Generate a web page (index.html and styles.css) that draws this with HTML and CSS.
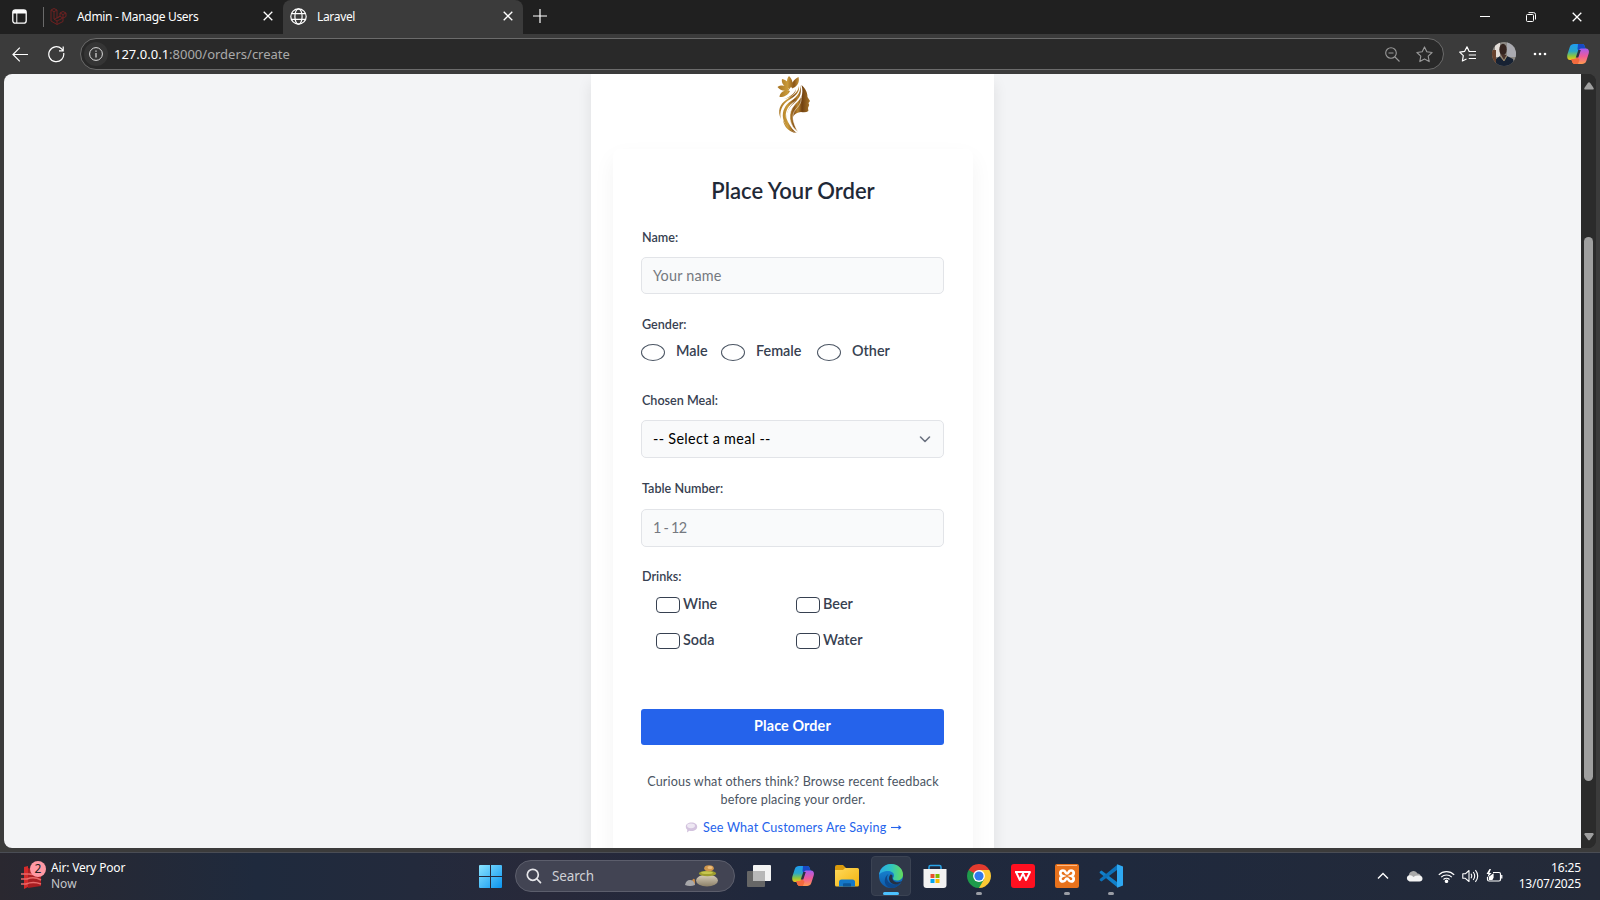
FILE: index.html
```html
<!DOCTYPE html>
<html lang="en">
<head>
<meta charset="utf-8">
<title>Laravel</title>
<link rel="stylesheet" href="styles.css">
</head>
<body>
<svg class="defs" width="0" height="0" aria-hidden="true">
  <defs>
    <linearGradient id="cpA" x1="0" y1="0" x2="0" y2="1"><stop offset="0" stop-color="#1f9bf0"/><stop offset=".45" stop-color="#2aa7c9"/><stop offset=".75" stop-color="#8cc63f"/><stop offset="1" stop-color="#f5c518"/></linearGradient>
    <linearGradient id="cpB" x1="0" y1="0" x2="0" y2="1"><stop offset="0" stop-color="#a55cf0"/><stop offset=".5" stop-color="#ee5a9a"/><stop offset="1" stop-color="#ff9a4d"/></linearGradient>
    <linearGradient id="gold" gradientUnits="userSpaceOnUse" x1="2" y1="0" x2="34" y2="0"><stop offset="0" stop-color="#a87422"/><stop offset=".3" stop-color="#c99a3a"/><stop offset=".5" stop-color="#8a5417"/><stop offset=".62" stop-color="#b98630"/><stop offset=".75" stop-color="#70400f"/><stop offset="1" stop-color="#a8762a"/></linearGradient>
    <linearGradient id="win" x1="0" y1="0" x2="1" y2="1"><stop offset="0" stop-color="#8be4ff"/><stop offset="1" stop-color="#0a94f0"/></linearGradient>
    <linearGradient id="fold" x1="0" y1="0" x2="1" y2="1"><stop offset="0" stop-color="#ffd95a"/><stop offset="1" stop-color="#f2b30f"/></linearGradient>
    <linearGradient id="edgeA" x1="0" y1="0" x2="1" y2="0"><stop offset="0" stop-color="#2aa9e8"/><stop offset=".5" stop-color="#2fc4c0"/><stop offset="1" stop-color="#66dc58"/></linearGradient>
    <linearGradient id="edgeB" x1="0" y1="0" x2="0" y2="1"><stop offset="0" stop-color="#1b8fdc"/><stop offset="1" stop-color="#0c59a8"/></linearGradient>
    <linearGradient id="stone" x1="0" y1="0" x2="0" y2="1"><stop offset="0" stop-color="#d9d0bc"/><stop offset="1" stop-color="#8c8068"/></linearGradient>
    <symbol id="copilot" viewBox="0 0 22 20">
      <path d="M7 0h8c2 0 2.600 1.500 3.300 4L19 6h-4c-2 0-2.500.8-3 2.500L9.800 16H3C.4 16-.2 13.500.4 10.500L2.800 3C3.600.8 5 0 7 0z" fill="url(#cpA)"/>
      <path d="M11 0h4c2 0 2.600 1.500 3.300 4L19 6h-4c-1.800 0-2.500.6-3 2L10.500 5z" fill="#1849c4"/>
      <path d="M15 20H8c-2 0-2.700-1.300-3.300-3.500L4.300 15H7c2 0 2.500-.8 3-2.500L12 6.500C12.500 5 13 4.500 15 4.500h4c2.700 0 3.400 2.500 2.700 5L19.300 17c-.8 2.200-2.300 3-4.300 3z" fill="url(#cpB)"/>
      <path d="M11 20H8c-2 0-2.700-1.300-3.300-3.500L4.300 15H7c1.600 0 2.300-.6 3-2.200l2.500 3z" fill="#f26a3d"/>
      <path d="M8.800 13.500L11.300 6h2.500L11.300 13.500z" fill="#2b3040"/>
    </symbol>
    <symbol id="close" viewBox="0 0 10 10"><path d="M.7.7l8.600 8.600M9.300.7L.7 9.300" stroke="#fff" stroke-width="1.300" fill="none"/></symbol>
  </defs>
</svg>

<div class="screen">
  <div class="tabstrip">
    <svg class="workspaces" width="15" height="15" viewBox="0 0 15 15"><rect x=".8" y=".8" width="13.400" height="13.400" rx="2.500" fill="none" stroke="#fff" stroke-width="1.300"/><path d="M1 2.500Q1 1 3 1h9q2 0 2 1.500V4.500H1z" fill="#fff"/><path d="M4.800 4v10" stroke="#fff"/></svg>
    <span class="strip-line"></span>
    <div class="tab">
      <svg width="17" height="17" viewBox="0 0 17 17" fill="none" stroke="#6e2020" stroke-width="1"><path d="M1 2l3-1.500L7 2v8l3-1.700V5L13 3.500 16 5v3.500l-3 1.600v3.400L7 16.500 1 13zM1 2l3 1.700L7 2M4 3.700V11l3 2 6-3M10 5l3 1.600L16 5M13 6.600v3.500L10 8.300 4 11.500M7 16.500V13"/></svg>
      <span class="tab-title">Admin - Manage Users</span>
      <svg class="tab-close" width="10" height="10"><use href="#close"/></svg>
    </div>
    <div class="tab tab-active">
      <svg width="17" height="17" viewBox="0 0 17 17" fill="none" stroke="#fff" stroke-width="1.200"><circle cx="8.500" cy="8.500" r="7.700"/><ellipse cx="8.500" cy="8.500" rx="3.600" ry="7.700"/><path d="M1.500 5.700h14M1.500 11.300h14"/></svg>
      <span class="tab-title">Laravel</span>
      <svg class="tab-close" width="10" height="10"><use href="#close"/></svg>
    </div>
    <svg class="newtab" width="14" height="14"><path d="M7 0v14M0 7h14" stroke="#fff" stroke-width="1.200"/></svg>
    <div class="winctl">
      <svg width="10" height="10"><path d="M0 4.500h10" stroke="#fff"/></svg>
      <svg width="10" height="10" viewBox="0 0 10 10" fill="none" stroke="#fff"><rect x=".5" y="2.500" width="7" height="7" rx="1"/><path d="M2.500.6H7.500Q9.500.6 9.500 2.500V7.500"/></svg>
      <svg width="10" height="10"><use href="#close"/></svg>
    </div>
  </div>

  <div class="toolbar">
    <svg class="back" width="16" height="15" viewBox="0 0 16 15" fill="none" stroke="#fff" stroke-width="1.200"><path d="M16 7.500H1M7.800.7L1 7.500l6.800 6.800"/></svg>
    <svg class="reload" width="17" height="17" viewBox="0 0 17 17" fill="none" stroke="#fff" stroke-width="1.200"><path d="M15.700 7A7.500 7.500 0 1 1 13.500 2.800L15 4.400M15.200.6v4.200H11"/></svg>
    <div class="address">
      <span class="info"><svg width="14" height="14" viewBox="0 0 14 14" fill="none" stroke="#ddd"><circle cx="7" cy="7" r="6.400"/><path d="M7 6v4.500M7 3.500v1.300" stroke-width="1.200"/></svg></span>
      <span class="url"><b>127.0.0.1</b>:8000/orders/create</span>
      <svg class="zoomicon" width="15" height="15" viewBox="0 0 15 15" fill="none" stroke="#999" stroke-width="1.100"><circle cx="6" cy="6" r="5.300"/><path d="M3.500 6h5M10 10l4.500 4.500"/></svg>
      <svg width="17" height="17" viewBox="0 0 17 17" fill="none" stroke="#999" stroke-width="1.100" stroke-linejoin="round"><path d="M8.500.9l2.300 4.900 5.300.7-3.900 3.700 1 5.400-4.700-2.700-4.700 2.700 1-5.400L.9 6.500l5.300-.7z"/></svg>
    </div>
    <svg class="favs" width="17" height="16" viewBox="0 0 17 16" fill="none" stroke="#fff" stroke-width="1.200" stroke-linejoin="round"><path d="M11 5.500h-.8L8 .8 5.700 5.300l-5 .8L4.300 9.600l-.9 5.400L7.500 13M11 5.500h6M9.800 9h7.200M9.800 12.500h7.200"/></svg>
    <svg class="avatar" width="24" height="24" viewBox="0 0 24 24"><clipPath id="av"><circle cx="12" cy="12" r="12"/></clipPath><g clip-path="url(#av)"><path fill="#8d8984" d="M0 0h24v24H0z"/><path fill="#e3ddd8" d="M3 0h5v15H3z"/><path fill="#69432f" d="M0 8h4v16H0z"/><path fill="#aaaab0" d="M15 0h9v15h-9z"/><ellipse cx="11" cy="7.500" rx="3.700" ry="5.800" fill="#35241f"/><path d="M4 24V17l4-3 4 5 3-5 6 3 2 8z" fill="#172233"/><path d="M8.500 12l3.500 6 2.500-5z" fill="#4a3229"/><path d="M8 14l4 5 3-5" fill="none" stroke="#b59a6a" stroke-width=".7"/></g></svg>
    <svg class="dots" width="14" height="4" fill="#fff"><circle cx="2" cy="2" r="1.300"/><circle cx="7" cy="2" r="1.300"/><circle cx="12" cy="2" r="1.300"/></svg>
    <svg class="cp-top" width="22" height="20"><use href="#copilot"/></svg>
  </div>

  <div class="viewport">
    <main class="page">
      <div class="column">
        <svg class="logo" width="36" height="60" viewBox="0 0 36 60" fill="url(#gold)">
          <path d="M15 13C11 10 9.500 5 13 1C17 5 17.500 9 15 13zM14 14C8 12 5 8 6 4C11 5 14.500 9 14 14zM13.500 15C8 16.500 4 15.500 1.500 12C6 9 10.500 11 13.500 15zM14 16C12 20.500 7 22.500 3.500 22C4 17.500 8 14.500 14 16zM16 13.500C14.500 9 17.500 4.500 22.500 2C24 8 20.500 12 16 13.500z"/>
          <path d="M25.500 10C30 14 31.500 18 31.500 22L34 26 32.500 28 33.200 30 32 33 32.400 36Q30 38 25 37C18 38 16 42 16 47C13.500 41 15 37 19 32C25 26 28 19 25.500 10z"/>
          <path d="M24 10C27 20 22 25 16 30C11 35 9 41 12 47C14.500 52 18 56 21 58C13 56 8 49 7 43C6 36 9 30 15 26C22 21 25 17 24 10z"/>
          <path d="M23 11C24 18 18 22 13 25C6 29 3 37 5 44C1 36 4 29 10 25C16 21 22 18 23 11zM20 14C19 18 14 22 8 24C14 23 20 19 20 14zM7 45C10 51 15 56 20 58C13 57 8 52 7 45z"/>
          <path d="M20 25.500C12 30 8 37 10.500 45C10.500 37 13 31 20 25.500z" fill="#fff"/>
          <path d="M25 22C21 29 13 32 14 44C15 50 18 54 22 57C17 48 14.500 40 20 34C24.500 29.500 25.500 26 25 22z" stroke="#fff" stroke-width=".5"/>
        </svg>
        <form class="card">
          <h1><span class="t-title">Place Your Order</span></h1>
          <label class="lbl lbl-name">Name:</label>
          <div class="field f-name"><span class="placeholder t-yn">Your name</span></div>
          <label class="lbl lbl-gender">Gender:</label>
          <div class="radios">
            <span class="radio"></span><span class="opt o-male">Male</span>
            <span class="radio"></span><span class="opt o-female">Female</span>
            <span class="radio"></span><span class="opt o-other">Other</span>
          </div>
          <label class="lbl lbl-meal">Chosen Meal:</label>
          <div class="field f-select"><span class="t-select">-- Select a meal --</span><svg width="12" height="8" viewBox="0 0 12 8" fill="none" stroke="#6b7280" stroke-width="1.600" stroke-linecap="round" stroke-linejoin="round"><path d="M1.500 2l4.500 4.500L10.500 2"/></svg></div>
          <label class="lbl lbl-table">Table Number:</label>
          <div class="field f-table"><span class="placeholder t-range">1 - 12</span></div>
          <label class="lbl lbl-drinks">Drinks:</label>
          <div class="drinks">
            <div><span class="check"></span><span class="opt">Wine</span></div>
            <div><span class="check"></span><span class="opt">Beer</span></div>
            <div><span class="check"></span><span class="opt">Soda</span></div>
            <div><span class="check"></span><span class="opt">Water</span></div>
          </div>
          <div class="submit"><span class="t-submit">Place Order</span></div>
          <p class="hint"><span>Curious what others think? Browse recent feedback</span><br><span>before placing your order.</span></p>
          <div class="more"><svg width="13" height="11" viewBox="0 0 13 11"><path d="M6.500.6c3.400 0 5.700 1.700 5.700 4.200S9.900 9 6.500 9c-.8 0-1.500-.1-2.200-.3L2 10.500l.3-2.700C1.300 7 .8 6 .8 4.800.8 2.300 3.100.6 6.500.6z" fill="#d3c3de"/><ellipse cx="6" cy="3.800" rx="4" ry="2.400" fill="#eee8f3"/></svg><span class="t-more">See What Customers Are Saying</span><svg class="arrow" width="11" height="7" viewBox="0 0 11 7"><path d="M0 3.500h9" stroke="#2563eb" stroke-width="1.100"/><path d="M7.500 1l3 2.500-3 2.500z" fill="#2563eb"/></svg></div>
        </form>
      </div>
    </main>
    <div class="scrollbar">
      <svg width="10" height="8"><path d="M4 .8Q5-.3 6 .8L9.600 6Q10 7.600 8.600 7.600H1.400Q0 7.600.4 6z" fill="#9f9f9f"/></svg>
      <span class="thumb"></span>
      <svg width="10" height="8"><path d="M4 6.800Q5 7.900 6 6.800L9.600 1.600Q10 0 8.600 0H1.400Q0 0 .4 1.600z" fill="#9f9f9f"/></svg>
    </div>
  </div>

  <div class="taskbar">
    <div class="weather">
      <svg width="28" height="32" viewBox="0 0 28 32"><path d="M5 7l4-1v21l-4 2z" fill="#d52a2a"/><path d="M9 8l13 4v14L9 28z" fill="#a81e22"/><path d="M2 14h8q6 1 12 0M2 19h6q7-3 14 1M2 24h5q7-3 15 0" stroke="#e86a6a" stroke-width="1.500" fill="none"/><circle cx="19" cy="9" r="8" fill="#ff99a4"/></svg>
      <span class="badge">2</span>
      <div class="wx"><span class="t-air">Air: Very Poor</span><span class="now">Now</span></div>
    </div>
    <svg class="start" width="23" height="23" viewBox="0 0 23 23" fill="url(#win)"><path d="M0 1Q0 0 1 0h10v11H0zM12 0h10q1 0 1 1v10H12zM0 12h11v11H1q-1 0-1-1zM12 12h11v10q0 1-1 1H12z"/></svg>
    <div class="search">
      <svg width="16" height="16" viewBox="0 0 16 16" fill="none" stroke="#e6e6ea" stroke-width="1.700" stroke-linecap="round"><circle cx="6.800" cy="6.800" r="5.500"/><path d="M11 11l3.500 3.700"/></svg>
      <span class="t-search">Search</span>
      <svg class="stones" width="34" height="22" viewBox="0 0 34 22"><ellipse cx="22" cy="15.500" rx="11" ry="6" fill="url(#stone)"/><ellipse cx="22.500" cy="8.500" rx="8.700" ry="2.800" fill="#9d9d2e"/><ellipse cx="22" cy="7.700" rx="6" ry="1.400" fill="#c6c64e"/><ellipse cx="24" cy="3.300" rx="4.800" ry="3" fill="#cf964c"/><ellipse cx="25" cy="2.500" rx="2.500" ry="1.500" fill="#edbd7c"/><path d="M5 19l3-5q2-1 2 2v4z" fill="#c88b45"/><path d="M0 20q1-5 5-5t5 5q-5 2-10 0z" fill="#a8a8aa"/></svg>
    </div>
    <div class="apps">
      <div class="app"><svg width="24" height="24" viewBox="0 0 24 24"><rect x="6" y="1" width="18" height="16" rx="1" fill="#f3f3f3"/><rect x="0" y="7" width="18" height="16" rx="1" fill="#666"/><path d="M6 7h12v10H6z" fill="#b8b8b8"/></svg></div>
      <div class="app"><svg width="22" height="20"><use href="#copilot"/></svg></div>
      <div class="app"><svg width="24" height="22" viewBox="0 0 24 22"><path d="M0 2Q0 0 2 0h6l2.500 2.500V7H0z" fill="#d99a0c"/><path d="M0 5h8l2-2h12.500Q24 3 24 4.500V20q0 1.500-1.500 1.500h-21Q0 21.500 0 20z" fill="url(#fold)"/><path d="M4 21.500V17q0-2.500 2.500-2.500h11Q20 14.500 20 17v4.500z" fill="#1478c8"/><path d="M8 21.500v-2.200q0-1 1-1h6q1 0 1 1v2.200z" fill="#0c5798"/></svg></div>
      <div class="app app-on"><svg width="24" height="24" viewBox="0 0 24 24"><circle cx="12" cy="12" r="12" fill="url(#edgeB)"/><path d="M0 11C1 4 6 0 12 0c7 0 12 5 12 10.500 0 4-3 6-6 6-2.500 0-4-1-4-2s1-1.500 1-3C15 8.500 12 7 9 7 5 7 1 9 0 11z" fill="url(#edgeA)"/><path d="M9.500 10C6 14 9 20 15 20.500c3 .2 5.500-.8 7-2 -2 3.500-6 5.500-10 5.500C7 23 5 19 6 15c.5-2.500 2-4 3.500-5z" fill="#0d488c"/><path d="M13.500 12c-1 4 2 6.500 5.500 6.300 2.500-.2 4-1.300 4.500-1.800-1 2-4 4-7.500 4-5-.5-8-6-4.500-10 1 0 2 .5 2 1.500z" fill="#263044"/></svg><span class="run run-wide"></span></div>
      <div class="app"><svg width="24" height="24" viewBox="0 0 24 24"><path d="M6 6V3q0-1.500 1.500-1.500h9Q18 1.500 18 3v3" fill="none" stroke="#29a3e8" stroke-width="1.500"/><path d="M.5 5h23v16q0 3-3 3h-17q-3 0-3-3z" fill="#f2f2f2"/><path fill="#e9502c" d="M7.500 10h4v4h-4z"/><path fill="#7fba00" d="M12.500 10h4v4h-4z"/><path fill="#00a4ef" d="M7.500 15h4v4h-4z"/><path fill="#fbb900" d="M12.500 15h4v4h-4z"/></svg></div>
      <div class="app"><svg width="24" height="24" viewBox="0 0 24 24"><path d="M12 12V24A12 12 0 0 0 22.390 6H12z" fill="#fcc934"/><path d="M12 6h10.400A12 12 0 0 0 1.610 6l5.200 9z" fill="#e33b2e"/><path d="M1.610 6A12 12 0 0 0 12 24l5.200-9z" fill="#1e9b4b"/><circle cx="12" cy="12" r="5.900" fill="#fff"/><circle cx="12" cy="12" r="4.600" fill="#3079ec"/></svg><span class="run"></span></div>
      <div class="app"><svg width="24" height="24" viewBox="0 0 24 24"><rect width="24" height="24" rx="3" fill="#ff1020"/><path d="M4 8h12M5 8l3.800 8L12 9.500l3 6.500L19 8h-3.500" fill="none" stroke="#fff" stroke-width="1.900" stroke-linejoin="round"/></svg></div>
      <div class="app"><svg width="24" height="24" viewBox="0 0 24 24"><rect width="24" height="24" rx="2" fill="#e8721c"/><path d="M2 1.500h20" stroke="#ffb780"/><path d="M8 6.500c-3.500 0-3.500 4.500-.5 5.500-3 1-3 5.500.5 5.500 3 0 2-3 4-3s1 3 4 3c3.500 0 3.500-4.500.5-5.500 3-1 3-5.500-.5-5.500-3 0-2 3-4 3s-1-3-4-3z" fill="none" stroke="#fff" stroke-width="2.700"/></svg><span class="run"></span></div>
      <div class="app"><svg width="24" height="24" viewBox="0 0 24 24"><path d="M1 7.500l1.500-1L18 18v5L.8 9q-.6-.8.2-1.500z" fill="#1180ca"/><path d="M1 16.500l1.500 1L18 6V1L.8 15q-.6.800.2 1.500z" fill="#0d72ba"/><path d="M17.500 0L24 2.500v19L17.500 24q1 0 .5-1.500V1.500Q18.500 0 17.500 0z" fill="#2ea8f2"/></svg><span class="run"></span></div>
    </div>
    <div class="tray">
      <svg class="up" width="12" height="8" fill="none" stroke="#fff" stroke-width="1.400"><path d="M1 6.500l5-5 5 5"/></svg>
      <svg class="cloud" width="17" height="12" viewBox="0 0 17 12"><path d="M3 6a4.500 4.500 0 0 1 8.500-2.500A4 4 0 0 1 15 7z" fill="#aaa"/><path d="M3.500 11.500a3.200 3.200 0 0 1 0-6.300c2-.2 3 .7 4 1.300 2-1 4-1.300 6-1 2 .3 3 1.600 3 3.200s-1.200 2.800-3 2.800z" fill="#f4f4f4"/></svg>
      <svg class="wifi" width="17" height="13" viewBox="0 0 17 13" fill="none" stroke="#fff" stroke-width="1.200"><path d="M.8 4.800a10.900 10.900 0 0 1 15.400 0M3.200 7.200a7.500 7.500 0 0 1 10.600 0M5.500 9.500a4.200 4.200 0 0 1 6 0"/><circle cx="8.500" cy="11.300" r="1.200" fill="#fff"/></svg>
      <svg class="spk" width="17" height="14" viewBox="0 0 17 14" fill="none" stroke="#fff" stroke-width="1.100" stroke-linejoin="round"><path d="M.8 4.800h2.500L7 1.500v11L3.300 9.300H.8zM9 4.800q1.500 2.200 0 4.400M11.200 3q3 4 0 8M13.400 1.200q4.600 5.800 0 11.600"/></svg>
      <svg class="bat" width="17" height="14" viewBox="0 0 17 14" fill="none" stroke="#fff" stroke-width="1.200"><path d="M7 3.500h6q1.500 0 1.500 1.500v5.500Q14.500 12 13 12H3q-1.500 0-1.500-1.500V8M15.800 6v3.500"/><path d="M3.500 10.500V8L7 5.500v3l-1 2z" fill="#fff"/><path d="M3.500 0L.5 5h2L1.500 8.500 5.500 4H3.300L5 0z" fill="#fff" stroke="none"/></svg>
      <div class="clock"><span>16:25</span><span>13/07/2025</span></div>
    </div>
  </div>
</div>
</body>
</html>
```
FILE: styles.css
```css
* { box-sizing: border-box; }
html, body { margin: 0; overflow: hidden; }
body { font-family: "Noto Sans", sans-serif; background: #3b3b3b; }
.defs { position: absolute; }
svg { display: block; flex: none; }
span, label { white-space: nowrap; }
.screen { width: 1600px; height: 900px; display: flex; flex-direction: column; overflow: hidden; background: #3b3b3b; }

/* browser tabs */
.tabstrip { height: 34px; flex: none; display: flex; align-items: center; background: #202020; color: #fff; font-size: 12px; padding-bottom: 1px; }
.workspaces { margin-left: 12px; }
.strip-line { width: 1px; height: 20px; margin-left: 16px; background: #6a6a6a; }
.tab { width: 239px; height: 34px; padding: 0 10px 1px 6px; display: flex; align-items: center; }
.tab-title { margin-left: 10px; letter-spacing: -.33px; }
.tab-close { margin-left: auto; }
.tab-active { width: 240px; background: #3b3b3b; border-radius: 8px 8px 0 0; padding-left: 7px; }
.newtab { margin: 0 0 2px 10px; }
.winctl { margin: 0 18px 0 auto; display: flex; gap: 36px; }

/* toolbar */
.toolbar { height: 40px; flex: none; display: flex; align-items: center; background: #3b3b3b; }
.back { margin-left: 12px; }
.reload { margin-left: 20px; }
.address { margin-left: 15px; width: 1364px; height: 32px; border: 1px solid #6b6b6b; border-radius: 16px; background: #292929; display: flex; align-items: center; padding: 0 10px 0 3px; }
.info { width: 24px; height: 24px; border-radius: 12px; background: #353535; display: grid; place-items: center; }
.url { margin-left: 6px; font-size: 13px; color: #a9a9a9; }
.url b { color: #fff; font-weight: 400; }
.zoomicon { margin: 0 16px 0 auto; }
.favs { margin-left: 15px; }
.avatar { margin-left: 16px; }
.dots { margin-left: 17px; }
.cp-top { margin-left: 20px; }

/* page viewport */
.viewport { height: 774px; flex: none; margin: 0 4px; display: flex; border-radius: 8px; overflow: hidden; background: #2b2b2b; }
.page { width: 1577px; background: #f3f4f6; display: flex; justify-content: center; overflow: hidden; }
.column { width: 403px; height: 900px; background: #fff; box-shadow: 0 9px 14px rgba(0,0,0,.09); display: flex; flex-direction: column; align-items: center; }
.logo { margin: 1px 0 14px 3px; flex: none; }
.card { width: 360px; height: 760px; flex: none; margin-left: 1px; padding: 28px 28px 0; border-radius: 7px; background: #fff; box-shadow: 0 9px 22px rgba(0,0,0,.05); display: flex; flex-direction: column; font-family: Lato, sans-serif; color: #1f2937; }
.card h1 { margin: 0; height: 28px; line-height: 28px; font-size: 22px; font-weight: 600; text-align: center; }
.lbl { height: 18px; line-height: 18px; flex: none; font-size: 12.600px; font-weight: 600; color: #374151; padding-left: 1px; }
.lbl-name { margin-top: 24px; }
.field { height: 38px; flex: none; border: 1px solid #e2e4e8; border-radius: 5px; background: #f9fafb; padding: 0 12px 1px 11px; display: flex; align-items: center; justify-content: space-between; font-size: 14.400px; color: #000; width: 303px; }
.placeholder { color: #757980; }
.t-yn { letter-spacing: .2px; }
.t-select { letter-spacing: .32px; }
.t-range { letter-spacing: -.75px; }
.f-name { margin-top: 10px; height: 37px; }
.lbl-gender { margin-top: 22px; }
.radios { height: 18px; margin-top: 9px; display: flex; align-items: center; }
.radio { width: 24px; height: 17px; border: 1px solid #4b5563; border-radius: 50%; background: #fff; flex: none; }
.opt { font-size: 14.400px; font-weight: 600; line-height: 18px; color: #374151; padding-bottom: 2px; }
.radios .opt { margin-left: 11px; }
.o-male { width: 45px; }
.o-female { width: 61px; }
.lbl-meal { margin-top: 31px; }
.f-select { margin-top: 10px; }
.lbl-table { margin-top: 22px; }
.f-table { margin-top: 11px; }
.lbl-drinks { margin-top: 21px; }
.drinks { margin: 10px 0 0 15px; display: grid; grid-template-columns: 140px 140px; grid-auto-rows: 18px; row-gap: 18px; }
.drinks div { display: flex; align-items: center; }
.check { width: 24px; height: 16px; border: 1px solid #374151; border-radius: 4px; background: #fff; margin-right: 3px; }
.submit { margin-top: 59px; width: 303px; height: 36px; flex: none; border-radius: 3px; background: #2563eb; color: #fff; font-size: 14.400px; font-weight: 700; line-height: 34px; text-align: center; letter-spacing: .1px; }
.hint { margin: 28px -10px 0; font-size: 12.600px; line-height: 18px; color: #4b5563; text-align: center; letter-spacing: .14px; }
.more { margin: 9px 0 0 44px; height: 18px; display: flex; align-items: center; font-size: 12.600px; color: #2563eb; }
.more span { margin: 0 5px 0 5px; letter-spacing: .19px; }

.scrollbar { width: 15px; background: #2b2b2b; display: flex; flex-direction: column; align-items: center; padding-top: 8px; }
.thumb { width: 9px; height: 544px; margin: 147px 0 52px; border-radius: 5px; background: #9f9f9f; }

/* taskbar */
.taskbar { height: 47px; margin-top: 4px; padding-bottom: 1px; flex: none; display: flex; border-top: 1px solid #4a4d55; background: linear-gradient(90deg, #2a2830 0, #1f2a3d 16%, #232a3c 26%, #28293a 34%, #20283c 48%, #1f293d 70%, #242a38 100%); color: #fff; font-size: 12px; align-items: center; height: 48px; }
.weather { position: relative; margin-left: 19px; display: flex; width: 460px; }
.badge { position: absolute; left: 11px; top: 1px; width: 16px; text-align: center; line-height: 16px; font-size: 12px; color: #222; }
.wx, .clock { display: flex; flex-direction: column; line-height: 16px; }
.wx { margin-left: 4px; }
.t-air { letter-spacing: -.18px; }
.now { color: #c5c6ca; }
.search { margin-left: 13px; width: 220px; height: 32px; border: 1px solid #5c5e6c; border-radius: 16px; background: #424453; display: flex; align-items: center; padding: 0 15px 0 10px; }
.t-search { margin-left: 10px; font-size: 13.500px; color: #d0d1d6; letter-spacing: -.15px; }
.stones { margin-left: auto; }
.apps { display: flex; margin-left: 4px; gap: 4px; }
.app { width: 40px; height: 40px; display: grid; place-items: center; position: relative; }
.app-on { background: #303849; border: 1px solid #3b4353; border-radius: 4px; }
.run { position: absolute; bottom: 1px; left: 17px; width: 6px; height: 3px; border-radius: 2px; background: #9a9da5; }
.run-wide { left: 11px; bottom: 0; width: 16px; background: #4cc2ff; }
.tray { margin: 0 19px 0 auto; display: flex; align-items: center; }
.cloud { margin-left: 17px; }
.wifi { margin-left: 15px; }
.spk { margin-left: 7px; }
.bat { margin-left: 7px; }
.clock { width: 62px; margin-left: 16px; align-items: flex-end; letter-spacing: -.15px; }
```
